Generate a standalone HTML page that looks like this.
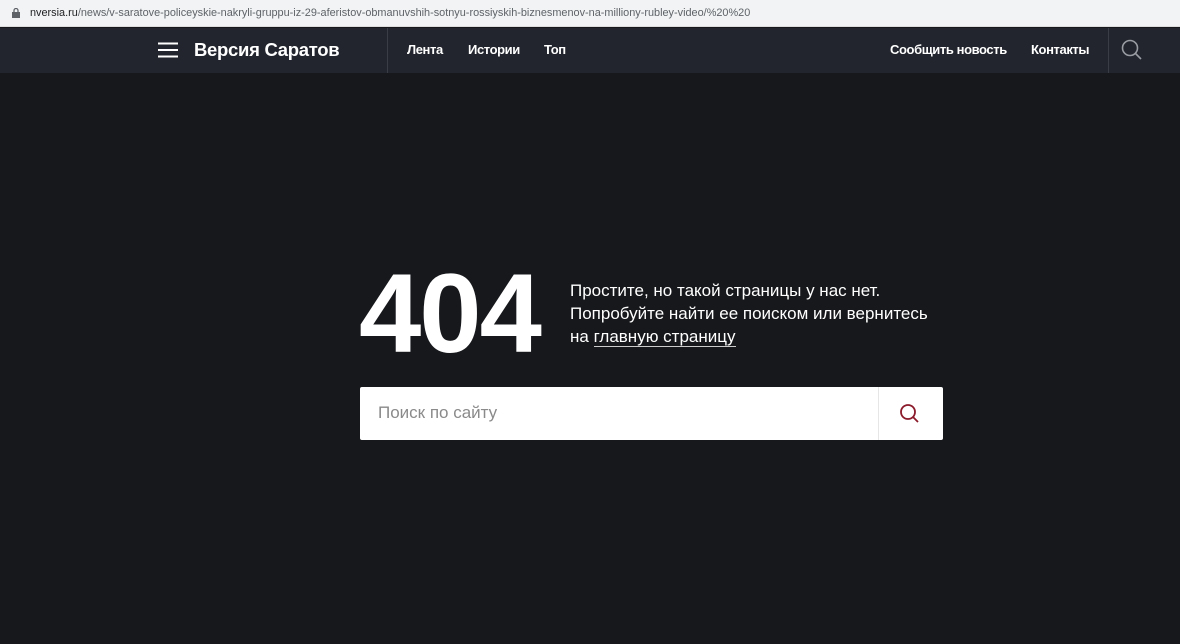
<!DOCTYPE html>
<html><head><meta charset="utf-8"><style>
*{margin:0;padding:0;box-sizing:border-box}
body{width:1180px;height:644px;background:#17181c;font-family:"Liberation Sans",sans-serif;overflow:hidden;position:relative}
.url{position:absolute;left:0;top:0;width:1180px;height:27px;background:#f1f3f4;border-bottom:1px solid #ddd}
.url span{position:absolute;left:30px;top:7px;font-size:10.9px;color:#5f6368;white-space:nowrap}
.url b{color:#202124;font-weight:normal}
.hdr{position:absolute;left:0;top:28px;width:1180px;height:45px;background:#22252d}
.t{position:absolute;color:#fff;font-size:13px;letter-spacing:-0.4px;font-weight:bold;top:14px;white-space:nowrap}
.sep{position:absolute;top:0;width:1px;height:45px;background:#3a3d45}
.txt{position:absolute;left:570px;top:279px;color:#fff;font-size:17px;line-height:23px}
.txt u{text-decoration:none;border-bottom:1px solid #ccc}
</style></head><body>
<div class="url"><svg style="position:absolute;left:12px;top:8px" width="8" height="10"><rect x="0" y="4" width="8" height="6" fill="#5f6368"/><path d="M2 4V2.5a2 2 0 0 1 4 0V4" stroke="#5f6368" fill="none" stroke-width="1.3"/></svg><span><b>nversia.ru</b>/news/v-saratove-policeyskie-nakryli-gruppu-iz-29-aferistov-obmanuvshih-sotnyu-rossiyskih-biznesmenov-na-milliony-rubley-video/%20%20</span></div>
<div class="hdr">
<svg style="position:absolute;left:158px;top:14px" width="20" height="16"><path d="M0 1.5H20M0 8H20M0 14.5H20" stroke="#fff" stroke-width="2"/></svg>
<div class="t" style="left:194px;top:11px;font-size:18.5px;letter-spacing:-0.3px">Версия Саратов</div>
<div class="sep" style="left:387px"></div>
<div class="t" style="left:407px">Лента</div>
<div class="t" style="left:468px">Истории</div>
<div class="t" style="left:544px">Топ</div>
<div class="t" style="left:890px">Сообщить новость</div>
<div class="t" style="left:1031px">Контакты</div>
<div class="sep" style="left:1108px"></div>
<svg style="position:absolute;left:1121px;top:11px" width="22" height="22"><circle cx="9" cy="9" r="7.5" stroke="#9a9ca3" stroke-width="1.6" fill="none"/><path d="M14.5 14.5L20 20" stroke="#9a9ca3" stroke-width="1.6"/></svg>
</div>
<div style="position:absolute;left:359px;top:254px;color:#fff;font-size:112px;font-weight:bold;letter-spacing:-2px;line-height:120px">404</div>
<div class="txt">Простите, но такой страницы у нас нет.<br>Попробуйте найти ее поиском или вернитесь<br>на <u>главную страницу</u></div>
<div style="position:absolute;left:360px;top:387px;width:583px;height:53px;background:#fff;border-radius:2px">
<div style="position:absolute;left:18px;top:16px;font-size:17px;color:#8a8a8a">Поиск по сайту</div>
<div style="position:absolute;left:518px;top:0;width:1px;height:53px;background:#e6e6e6"></div>
<svg style="position:absolute;left:539px;top:16px" width="22" height="22"><circle cx="9" cy="9" r="7" stroke="#8b1a2b" stroke-width="1.8" fill="none"/><path d="M14 14L19 19" stroke="#8b1a2b" stroke-width="1.8"/></svg>
</div>
</body></html>
